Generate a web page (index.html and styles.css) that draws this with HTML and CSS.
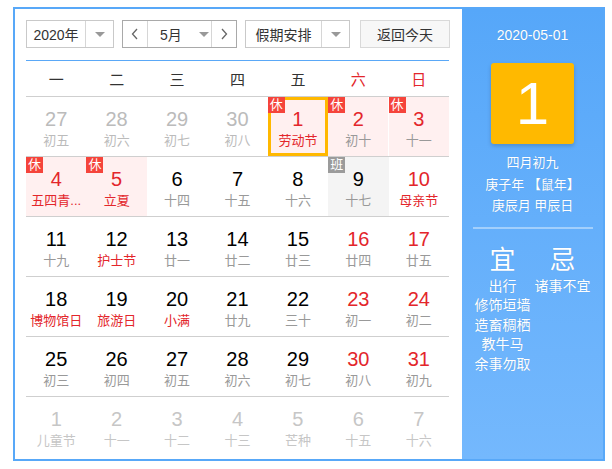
FILE: index.html
```html
<!DOCTYPE html>
<html lang="zh-CN">
<head>
<meta charset="utf-8">
<title>万年历</title>
<link rel="stylesheet" href="styles.css">
</head>
<body>
<div class="calendar">
  <div class="main">
    <div class="controls">
      <div class="select year">
        <span class="sel-text">2020年</span>
        <span class="sel-arrow"><i class="tri"></i></span>
      </div>
      <div class="month-group">
        <span class="nav"><svg width="8" height="12" viewBox="0 0 8 12"><polyline points="6,1 1.5,6 6,11" fill="none" stroke="#666" stroke-width="1.3"/></svg></span>
        <span class="month-sel"><span class="m-text">5月</span><i class="tri"></i></span>
        <span class="nav"><svg width="8" height="12" viewBox="0 0 8 12"><polyline points="2,1 6.5,6 2,11" fill="none" stroke="#666" stroke-width="1.3"/></svg></span>
      </div>
      <div class="select holiday">
        <span class="sel-text">假期安排</span>
        <span class="sel-arrow"><i class="tri"></i></span>
      </div>
      <div class="today-btn">返回今天</div>
    </div>
    <div class="week-head">
      <span>一</span><span>二</span><span>三</span><span>四</span><span>五</span><span class="we">六</span><span class="we">日</span>
    </div>
    <div class="grid">
      <div class="cell other"><b>27</b><em>初五</em></div>
      <div class="cell other"><b>28</b><em>初六</em></div>
      <div class="cell other"><b>29</b><em>初七</em></div>
      <div class="cell other"><b>30</b><em>初八</em></div>
      <div class="cell rest selected red fest"><span class="badge">休</span><b>1</b><em>劳动节</em></div>
      <div class="cell rest red gap-r"><span class="badge">休</span><b>2</b><em>初十</em></div>
      <div class="cell rest red"><span class="badge">休</span><b>3</b><em>十一</em></div>

      <div class="cell rest red fest"><span class="badge">休</span><b>4</b><em>五四青...</em></div>
      <div class="cell rest red fest"><span class="badge">休</span><b>5</b><em>立夏</em></div>
      <div class="cell"><b>6</b><em>十四</em></div>
      <div class="cell"><b>7</b><em>十五</em></div>
      <div class="cell"><b>8</b><em>十六</em></div>
      <div class="cell work"><span class="badge gray">班</span><b>9</b><em>十七</em></div>
      <div class="cell red fest"><b>10</b><em>母亲节</em></div>

      <div class="cell"><b>11</b><em>十九</em></div>
      <div class="cell fest"><b>12</b><em>护士节</em></div>
      <div class="cell"><b>13</b><em>廿一</em></div>
      <div class="cell"><b>14</b><em>廿二</em></div>
      <div class="cell"><b>15</b><em>廿三</em></div>
      <div class="cell red"><b>16</b><em>廿四</em></div>
      <div class="cell red"><b>17</b><em>廿五</em></div>

      <div class="cell fest"><b>18</b><em>博物馆日</em></div>
      <div class="cell fest"><b>19</b><em>旅游日</em></div>
      <div class="cell fest"><b>20</b><em>小满</em></div>
      <div class="cell"><b>21</b><em>廿九</em></div>
      <div class="cell"><b>22</b><em>三十</em></div>
      <div class="cell red"><b>23</b><em>初一</em></div>
      <div class="cell red"><b>24</b><em>初二</em></div>

      <div class="cell"><b>25</b><em>初三</em></div>
      <div class="cell"><b>26</b><em>初四</em></div>
      <div class="cell"><b>27</b><em>初五</em></div>
      <div class="cell"><b>28</b><em>初六</em></div>
      <div class="cell"><b>29</b><em>初七</em></div>
      <div class="cell red"><b>30</b><em>初八</em></div>
      <div class="cell red"><b>31</b><em>初九</em></div>

      <div class="cell other last"><b>1</b><em>儿童节</em></div>
      <div class="cell other last"><b>2</b><em>十一</em></div>
      <div class="cell other last"><b>3</b><em>十二</em></div>
      <div class="cell other last"><b>4</b><em>十三</em></div>
      <div class="cell other last"><b>5</b><em>芒种</em></div>
      <div class="cell other last"><b>6</b><em>十五</em></div>
      <div class="cell other last"><b>7</b><em>十六</em></div>
    </div>
  </div>
  <div class="side">
    <div class="side-date">2020-05-01</div>
    <div class="big-day">1</div>
    <div class="lunar">四月初九</div>
    <div class="lunar">庚子年 【鼠年】</div>
    <div class="lunar">庚辰月 甲辰日</div>
    <div class="side-line"></div>
    <div class="yiji">
      <div class="yj-col">
        <div class="yj-title">宜</div>
        <div class="yj-item">出行</div>
        <div class="yj-item">修饰垣墙</div>
        <div class="yj-item">造畜稠栖</div>
        <div class="yj-item">教牛马</div>
        <div class="yj-item">余事勿取</div>
      </div>
      <div class="yj-col">
        <div class="yj-title">忌</div>
        <div class="yj-item">诸事不宜</div>
      </div>
    </div>
  </div>
</div>
</body>
</html>
```
FILE: styles.css
```css
* { box-sizing: border-box; }
html, body { margin: 0; padding: 0; background: #fff; }
body {
  font-family: "Liberation Sans", "Noto Sans CJK SC", sans-serif;
  color: #333;
}
.calendar {
  display: flex;
  margin: 7px 0 0 13px;
  width: 592px;
  height: 454px;
  border: 2px solid #58a8f8;
}
.main {
  width: 447px;
  padding: 11px 0 0 11px;
  background: #fff;
}
.controls {
  display: flex;
  height: 28px;
  width: 425px;
}
.select {
  display: flex;
  border: 1px solid #c9c9c9;
  background: #fff;
  height: 28px;
}
.sel-text {
  flex: 1;
  display: flex;
  align-items: center;
  justify-content: center;
  font-size: 14px;
  border-right: 1px solid #d6d6d6;
}
.sel-arrow {
  width: 27px;
  display: flex;
  align-items: center;
  justify-content: center;
}
.tri {
  display: block;
  width: 0;
  height: 0;
  border-left: 5px solid transparent;
  border-right: 5px solid transparent;
  border-top: 5px solid #999;
}
.year { width: 88px; }
.month-group {
  display: flex;
  width: 115px;
  height: 28px;
  margin-left: 8px;
  border: 1px solid #a9a9a9;
}
.nav {
  width: 24px;
  display: flex;
  align-items: center;
  justify-content: center;
}
.month-sel {
  flex: 1;
  display: flex;
  align-items: center;
  border-left: 1px solid #d6d6d6;
  border-right: 1px solid #d6d6d6;
  font-size: 14px;
  padding-left: 12px;
}
.m-text { width: 39px; }
.holiday { width: 105px; margin-left: 8px; }
.today-btn {
  width: 90px;
  margin-left: 10px;
  height: 28px;
  border: 1px solid #d9d9d9;
  background: #f7f7f7;
  display: flex;
  align-items: center;
  justify-content: center;
  font-size: 14px;
  color: #333;
}
.week-head {
  display: grid;
  grid-template-columns: repeat(7, 1fr);
  width: 423px;
  margin-top: 12px;
  border-top: 1px solid #5aa8f7;
  border-bottom: 1px solid #cfcfcf;
  height: 37px;
  align-items: center;
}
.week-head span {
  text-align: center;
  font-size: 15px;
  color: #333;
  padding-bottom: 1px;
}
.week-head .we { color: #e3262b; }
.grid {
  display: grid;
  grid-template-columns: repeat(7, 1fr);
  grid-auto-rows: 60px;
  width: 423px;
}
.cell {
  position: relative;
  display: flex;
  flex-direction: column;
  align-items: center;
  border-bottom: 1px solid #cfcfcf;
  padding-top: 10px;
}
.cell.last { border-bottom: none; }
.cell.gap-r { box-shadow: inset -1px 0 0 #fff; }
.cell b {
  font-weight: normal;
  font-size: 20px;
  line-height: 24px;
  color: #000;
}
.cell em {
  font-style: normal;
  font-size: 13px;
  line-height: 19px;
  color: #999;
  white-space: nowrap;
}
.cell.red b { color: #e3262b; }
.cell.fest em { color: #e3262b; }
.cell.other b { color: #bbb; }
.cell.other em { color: #bbb; }
.cell.other.last b { color: #c6c6c6; }
.cell.other.last em { color: #c6c6c6; }
.cell.rest { background: #fff0f0; }
.cell.work { background: #f4f4f4; }
.cell.selected { box-shadow: inset 0 0 0 3px #ffb800; }
.badge {
  position: absolute;
  top: 0;
  left: 0;
  width: 17px;
  height: 16px;
  background: #f5443b;
  color: #fff;
  font-size: 13px;
  line-height: 16px;
  text-align: center;
}
.badge.gray { background: #9b9b9b; }
.side {
  width: 141px;
  background: linear-gradient(#56a7f9, #74b8fd);
  color: #fff;
  display: flex;
  flex-direction: column;
  align-items: center;
  text-shadow: 0 0 1px rgba(0,0,0,0.15);
}
.side-date {
  margin-top: 17px;
  font-size: 14px;
  line-height: 18px;
}
.big-day {
  margin-top: 19px;
  width: 83px;
  height: 81px;
  border-radius: 3px;
  background: #ffb900;
  box-shadow: 0 2px 4px rgba(0,0,0,0.18);
  font-size: 60px;
  line-height: 81px;
  text-align: center;
  margin-bottom: 8px;
  text-shadow: none;
}
.lunar {
  font-size: 13px;
  line-height: 21.5px;
}
.side-line {
  margin-top: 10px;
  width: 120px;
  height: 2px;
  background: rgba(255,255,255,0.4);
}
.yiji {
  display: flex;
  width: 120px;
  margin-top: 16px;
}
.yj-col {
  width: 60px;
  display: flex;
  flex-direction: column;
  align-items: center;
}
.yj-title {
  font-size: 26px;
  line-height: 30px;
  margin-bottom: 2px;
}
.yj-item {
  font-size: 14px;
  line-height: 19.5px;
  white-space: nowrap;
}
```
